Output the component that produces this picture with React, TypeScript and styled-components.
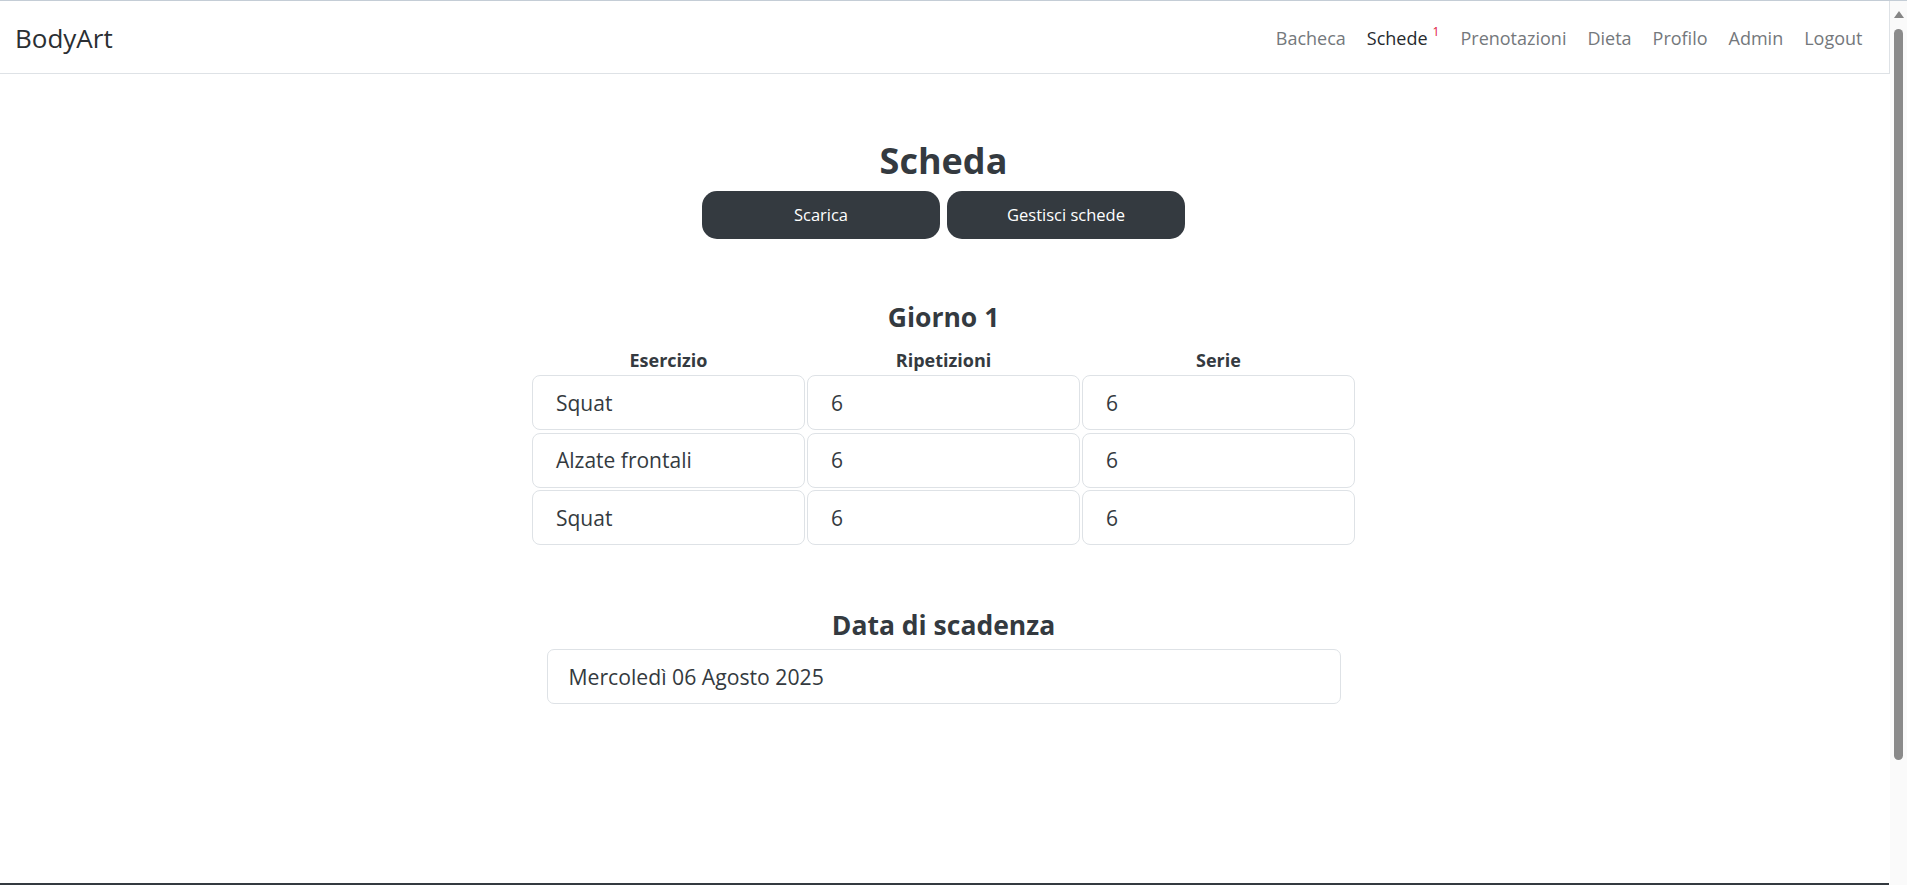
import React from "react";
import styled, { createGlobalStyle } from "styled-components";

const GlobalStyle = createGlobalStyle`
  html, body { margin: 0; padding: 0; background: #fff; }
  body {
    font-family: "Open Sans", "Noto Sans", sans-serif;
    color: #212529;
    overflow: hidden;
  }
  *, *::before, *::after { box-sizing: border-box; }
`;

const Root = styled.div`
  display: flex;
  height: 100vh;
  border-top: 1px solid #c4cdd6;
  overflow: hidden;
`;

const Main = styled.div`
  flex: 1;
  min-width: 0;
  display: flex;
  flex-direction: column;
  overflow: hidden;
`;

const Navbar = styled.nav`
  flex: 0 0 73px;
  display: flex;
  align-items: center;
  justify-content: space-between;
  padding: 3px 16px 0 15px;
  background: #fff;
  border-bottom: 1px solid #dee2e6;
  border-right: 1px solid #dee2e6;
`;

const Brand = styled.a`
  font-size: 26px;
  line-height: 1.5;
  color: #2b2f33;
  text-decoration: none;
`;

const NavList = styled.ul`
  display: flex;
  list-style: none;
  margin: 0;
  padding: 0;
`;

const NavLink = styled.a<{ $active?: boolean }>`
  display: block;
  padding: 0 10.5px;
  font-size: 18px;
  line-height: 1.5;
  text-decoration: none;
  color: ${(p) => (p.$active ? "#262a2e" : "#74787c")};
`;

const Badge = styled.sup`
  position: relative;
  top: -9px;
  margin-left: 5px;
  font-size: 12px;
  line-height: 0;
  vertical-align: baseline;
  color: #e0143c;
`;

const Content = styled.main`
  flex: 0 0 809px;
  display: flex;
  flex-direction: column;
  align-items: center;
  padding-right: 3px;
`;

const Title = styled.h1`
  margin: 65px 0 0;
  font-size: 36px;
  font-weight: 700;
  line-height: 1.2;
  color: #343a40;
`;

const ButtonRow = styled.div`
  display: flex;
  gap: 7px;
  margin-top: 9px;
`;

const ActionButton = styled.button`
  width: 238px;
  height: 48px;
  padding: 0;
  border: 0;
  border-radius: 15px;
  background: #343a40;
  color: #fff;
  font-family: inherit;
  font-size: 16.5px;
  line-height: 1.5;
  cursor: pointer;
`;

const SectionTitle = styled.h4<{ $mt: number }>`
  margin: ${(p) => p.$mt}px 0 0;
  font-size: 26.5px;
  font-weight: 700;
  line-height: 1.2;
  color: #343a40;
`;

const Grid = styled.div`
  display: grid;
  grid-template-columns: repeat(3, 273px);
  grid-template-rows: 27px;
  grid-auto-rows: 55px;
  column-gap: 2px;
  row-gap: 2.5px;
  margin-top: 12px;
`;

const HeaderCell = styled.div`
  padding-top: 1px;
  text-align: center;
  font-size: 18px;
  font-weight: 700;
  line-height: 26px;
  color: #343a40;
`;

const Cell = styled.div`
  display: flex;
  align-items: center;
  padding: 0 22px 0 23px;
  border: 1px solid #dee2e6;
  border-radius: 8px;
  font-size: 21px;
  color: #343a40;
  background: #fff;
`;

const DateBox = styled(Cell)`
  width: 794px;
  height: 55px;
  margin-top: 7px;
  padding: 0 21px;
  border-radius: 7px;
  font-size: 21.2px;
`;

const Footer = styled.footer`
  flex: 0 0 60px;
  background: #343a40;
  margin-right: 1px;
`;

const ScrollTrack = styled.div`
  flex: 0 0 17px;
  display: flex;
  flex-direction: column;
  align-items: center;
  background: #fafafa;
`;

const ArrowUp = styled.svg`
  margin-top: 9px;
  flex-shrink: 0;
`;

const Thumb = styled.div`
  margin-top: 10px;
  width: 9px;
  height: 731px;
  border-radius: 5px;
  background: #8a8a8a;
  flex-shrink: 0;
`;

const navItems = [
  { label: "Bacheca" },
  { label: "Schede", active: true, badge: "1" },
  { label: "Prenotazioni" },
  { label: "Dieta" },
  { label: "Profilo" },
  { label: "Admin" },
  { label: "Logout" },
];

const rows = [
  ["Squat", "6", "6"],
  ["Alzate frontali", "6", "6"],
  ["Squat", "6", "6"],
];

export default function App() {
  return (
    <>
      <GlobalStyle />
      <Root>
        <Main>
          <Navbar>
            <Brand href="#">BodyArt</Brand>
            <NavList>
              {navItems.map((item) => (
                <li key={item.label}>
                  <NavLink href="#" $active={item.active}>
                    {item.label}
                    {item.badge && <Badge>{item.badge}</Badge>}
                  </NavLink>
                </li>
              ))}
            </NavList>
          </Navbar>
          <Content>
            <Title>Scheda</Title>
            <ButtonRow>
              <ActionButton>Scarica</ActionButton>
              <ActionButton>Gestisci schede</ActionButton>
            </ButtonRow>
            <SectionTitle $mt={63}>Giorno 1</SectionTitle>
            <Grid>
              <HeaderCell>Esercizio</HeaderCell>
              <HeaderCell>Ripetizioni</HeaderCell>
              <HeaderCell>Serie</HeaderCell>
              {rows.map((r, i) =>
                r.map((v, j) => <Cell key={`${i}-${j}`}>{v}</Cell>)
              )}
            </Grid>
            <SectionTitle $mt={65}>Data di scadenza</SectionTitle>
            <DateBox>Mercoledì 06 Agosto 2025</DateBox>
          </Content>
          <Footer />
        </Main>
        <ScrollTrack>
          <ArrowUp width="10" height="9" viewBox="0 0 10 9">
            <polygon points="5,1 10,8 0,8" fill="#858585" />
          </ArrowUp>
          <Thumb />
        </ScrollTrack>
      </Root>
    </>
  );
}
